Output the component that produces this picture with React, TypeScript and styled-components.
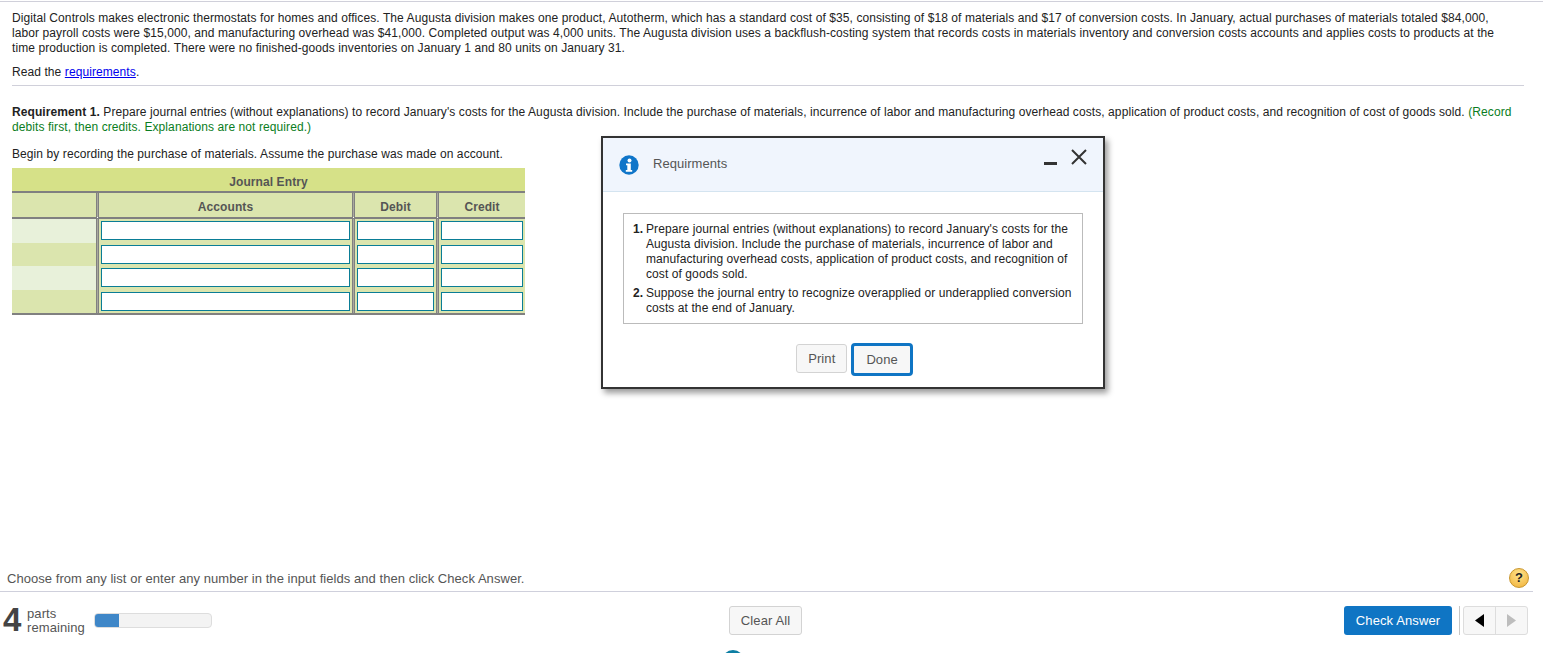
import React from "react";
import styled, { createGlobalStyle } from "styled-components";

const GlobalStyle = createGlobalStyle`
  html, body {
    margin: 0;
    padding: 0;
    background: #fff;
  }
  body {
    font-family: "Liberation Sans", Arial, sans-serif;
    font-size: 12px;
    letter-spacing: 0.085px;
    color: #222;
  }
`;

const rows = [0, 1, 2, 3];

const App: React.FC = () => (
  <>
    <GlobalStyle />
    <Page>
      <Question>
        <Intro>
          Digital Controls makes electronic thermostats for homes and offices. The Augusta division makes one product, Autotherm, which has a standard cost of $35, consisting of $18 of materials and $17 of conversion costs. In January, actual purchases of materials totaled $84,000, labor payroll costs were $15,000, and manufacturing overhead was $41,000. Completed output was 4,000 units. The Augusta division uses a backflush-costing system that records costs in materials inventory and conversion costs accounts and applies costs to products at the time production is completed. There were no finished-goods inventories on January 1 and 80 units on January 31.
        </Intro>
        <ReadLine>
          Read the <a href="#requirements">requirements</a>.
        </ReadLine>
      </Question>

      <Requirement>
        <Paragraph>
          <strong>Requirement 1.</strong> Prepare journal entries (without explanations) to record January's costs for the Augusta division. Include the purchase of materials, incurrence of labor and manufacturing overhead costs, application of product costs, and recognition of cost of goods sold. <Hint>(Record debits first, then credits. Explanations are not required.)</Hint>
        </Paragraph>
        <Instruction>Begin by recording the purchase of materials. Assume the purchase was made on account.</Instruction>

        <JournalTable>
          <TableTitle>Journal Entry</TableTitle>
          <HeadCell />
          <HeadCell>Accounts</HeadCell>
          <HeadCell>Debit</HeadCell>
          <HeadCell>Credit</HeadCell>
          {rows.map((row) => (
            <React.Fragment key={row}>
              <StripeCell $alt={row % 2 === 1} />
              <InputCell><AmountInput aria-label="Account" /></InputCell>
              <InputCell><AmountInput aria-label="Debit" /></InputCell>
              <InputCell><AmountInput aria-label="Credit" /></InputCell>
            </React.Fragment>
          ))}
        </JournalTable>
      </Requirement>

      <Spacer />

      <Prompt>
        <span>Choose from any list or enter any number in the input fields and then click Check Answer.</span>
        <HelpBadge>?</HelpBadge>
      </Prompt>

      <Footer>
        <Parts>
          <PartsCount>4</PartsCount>
          <PartsLabel>parts<br />remaining</PartsLabel>
          <Progress><ProgressFill style={{ width: `${(24 / 118) * 100}%` }} /></Progress>
        </Parts>
        <GhostButton>Clear All</GhostButton>
        <Actions>
          <PrimaryButton>Check Answer</PrimaryButton>
          <Divider />
          <Pager>
            <PagerButton aria-label="Previous">
              <svg width="9" height="13" viewBox="0 0 9 13"><path d="M9 0v13L0 6.500z" fill="#000" /></svg>
            </PagerButton>
            <PagerButton aria-label="Next">
              <svg width="9" height="13" viewBox="0 0 9 13"><path d="M0 0v13l9-6.500z" fill="#bdbdbd" /></svg>
            </PagerButton>
          </Pager>
        </Actions>
      </Footer>

      <PeekingDot />

      <Dialog>
        <DialogHeader>
          <svg width="20" height="20" viewBox="0 0 20 20">
            <circle cx="10" cy="10" r="9.700" fill="#0f75c9" />
            <circle cx="10.500" cy="5.500" r="2" fill="#fff" />
            <path d="M7 8.500h4.800v6.500h1.400v1.700H6.800V15h1.500v-4.800H7z" fill="#fff" />
          </svg>
          <DialogTitle>Requirments</DialogTitle>
          <WindowControls>
            <Minimize />
            <svg width="16" height="16" viewBox="0 0 16 16">
              <path d="M1 1l14 14M15 1L1 15" stroke="#333" strokeWidth="2" fill="none" />
            </svg>
          </WindowControls>
        </DialogHeader>
        <DialogBody>
          <RequirementList>
            <RequirementItem>
              <b>1.</b>
              <span>Prepare journal entries (without explanations) to record January's costs for the Augusta division. Include the purchase of materials, incurrence of labor and manufacturing overhead costs, application of product costs, and recognition of cost of goods sold.</span>
            </RequirementItem>
            <RequirementItem>
              <b>2.</b>
              <span>Suppose the journal entry to recognize overapplied or underapplied conversion costs at the end of January.</span>
            </RequirementItem>
          </RequirementList>
          <DialogActions>
            <GhostButton>Print</GhostButton>
            <DoneButton>Done</DoneButton>
          </DialogActions>
        </DialogBody>
      </Dialog>
    </Page>
  </>
);

const Page = styled.div`
  position: relative;
  display: flex;
  flex-direction: column;
  box-sizing: border-box;
  height: 653px;
  padding-top: 1px;
  overflow: hidden;
`;

const Question = styled.section`
  position: relative;
  margin: 0 19px 0 12px;
  padding: 10px 0 5px;
  border-bottom: 1px solid #d0d0da;

  &::before {
    content: "";
    position: absolute;
    top: 0;
    left: -12px;
    right: -19px;
    height: 1px;
    background: #d0d0da;
  }
`;

const Paragraph = styled.p`
  margin: 0;
  line-height: 15px;
`;

const Intro = styled(Paragraph)`
  max-width: 1490px;
`;

const ReadLine = styled.p`
  margin: 9px 0 0;
  line-height: 15px;

  a {
    color: #0000ee;
  }
`;

const Requirement = styled.section`
  padding: 19px 19px 0 12px;
`;

const Hint = styled.span`
  color: #0a7d22;
`;

const Instruction = styled.p`
  margin: 12px 0 6px;
  line-height: 15px;
`;

const JournalTable = styled.div`
  display: grid;
  grid-template-columns: 84px 256px 84px 89px;
  width: 513px;
  border-bottom: 2px solid #808080;
`;

const TableTitle = styled.div`
  grid-column: 1 / -1;
  height: 23px;
  line-height: 29px;
  text-align: center;
  font-weight: 700;
  color: #555;
  background: #d6e188;
  border-bottom: 2px solid #808080;
`;

const columnRule = `
  border-left: 3px double #808080;
  background: linear-gradient(#dbe5ae, #dbe5ae) padding-box, linear-gradient(#a9a99e, #a9a99e) border-box;
`;

const HeadCell = styled.div`
  height: 24px;
  line-height: 28px;
  text-align: center;
  font-weight: 700;
  color: #555;
  background: #dbe5ae;
  border-bottom: 2px solid #808080;

  & + & {
    ${columnRule}
  }
`;

const StripeCell = styled.div<{ $alt: boolean }>`
  height: 23.500px;
  background: ${(props) => (props.$alt ? "#dbe5ae" : "#e8f1da")};
`;

const InputCell = styled.div`
  display: flex;
  align-items: center;
  height: 23.500px;
  padding: 0 2px;
  ${columnRule}
`;

const AmountInput = styled.input`
  display: block;
  box-sizing: border-box;
  width: 100%;
  height: 19px;
  margin: 0;
  padding: 0;
  background: #fff;
  border: 1px solid #0a7d96;
  outline: none;
`;

const Spacer = styled.div`
  flex: 1;
`;

const Prompt = styled.div`
  display: flex;
  align-items: center;
  justify-content: space-between;
  height: 26px;
  margin-right: 10px;
  padding: 0 4px 0 7px;
  border-bottom: 1px solid #cfd0dc;
  color: #555;
  font-size: 13px;
  letter-spacing: 0.05px;
`;

const HelpBadge = styled.span`
  width: 20px;
  height: 20px;
  margin-bottom: 1px;
  border: 1px solid #c9962d;
  border-radius: 50%;
  box-sizing: border-box;
  display: flex;
  align-items: center;
  justify-content: center;
  font-size: 13px;
  font-weight: 700;
  color: #222;
  background: radial-gradient(circle at 50% 30%, #ffe38a, #f0b038);
`;

const Footer = styled.div`
  display: grid;
  grid-template-columns: 1fr auto 1fr;
  align-items: center;
  height: 61px;
  padding: 0 15px 4px 3px;
  box-sizing: border-box;
`;

const Parts = styled.div`
  display: flex;
  align-items: center;
`;

const PartsCount = styled.span`
  width: 24px;
  margin-bottom: 2px;
  font-size: 33px;
  line-height: 30px;
  font-weight: 700;
  color: #444;
`;

const PartsLabel = styled.span`
  width: 67px;
  font-size: 13px;
  line-height: 14px;
  color: #555;
`;

const Progress = styled.div`
  width: 118px;
  height: 15px;
  box-sizing: border-box;
  border: 1px solid #ddd;
  border-radius: 4px;
  background: #f3f3f3;
  overflow: hidden;
`;

const ProgressFill = styled.div`
  height: 100%;
  background: #3f87c8;
`;

const GhostButton = styled.button`
  height: 29px;
  padding: 0 11px;
  border: 1px solid #d3d3d3;
  border-radius: 3px;
  background: #f7f7f7;
  font: 13px "Liberation Sans", Arial, sans-serif;
  letter-spacing: 0.1px;
  color: #555;
`;

const Actions = styled.div`
  display: flex;
  align-items: center;
  justify-content: flex-end;
`;

const PrimaryButton = styled.button`
  width: 108px;
  height: 29px;
  padding: 0;
  border: 0;
  border-radius: 3px;
  background: #0f75c4;
  color: #fff;
  font: 13px "Liberation Sans", Arial, sans-serif;
  letter-spacing: 0.1px;
`;

const Divider = styled.span`
  width: 1px;
  height: 29px;
  margin: 0 3px 0 7px;
  background: #c6c6c6;
`;

const Pager = styled.div`
  display: flex;
  width: 65px;
  height: 29px;
  box-sizing: border-box;
  border: 1px solid #ddd;
  border-radius: 3px;
  background: #f7f7f7;
`;

const PagerButton = styled.button`
  flex: 1;
  padding: 0;
  border: 0;
  background: none;
  display: flex;
  align-items: center;
  justify-content: center;

  & + & {
    border-left: 1px solid #ddd;
  }
`;

const PeekingDot = styled.div`
  position: absolute;
  left: 722px;
  top: 650px;
  width: 22px;
  height: 22px;
  border-radius: 50%;
  background: #0c7ea3;
`;

const Dialog = styled.div`
  position: absolute;
  left: 601px;
  top: 136px;
  width: 504px;
  height: 253px;
  box-sizing: border-box;
  border: 2px solid #333;
  background: #fff;
  box-shadow: 3px 4px 6px rgba(0, 0, 0, 0.4);
`;

const DialogHeader = styled.header`
  display: flex;
  align-items: center;
  gap: 14px;
  height: 54px;
  box-sizing: border-box;
  padding: 0 16px;
  background: #f0f5fd;
  border-bottom: 1px solid #d4e4f0;
`;

const DialogTitle = styled.span`
  flex: 1;
  margin-bottom: 2px;
  font-size: 13px;
  letter-spacing: 0.05px;
  color: #555;
`;

const WindowControls = styled.div`
  display: flex;
  align-items: flex-end;
  gap: 14px;
  margin-bottom: 15px;
`;

const Minimize = styled.span`
  width: 13px;
  height: 3px;
  background: #333;
`;

const DialogBody = styled.div`
  padding: 21px 20px 0;
`;

const RequirementList = styled.div`
  box-sizing: border-box;
  width: 460px;
  padding: 8px 8px 7px 9px;
  border: 1px solid #bbb;
`;

const RequirementItem = styled.div`
  display: grid;
  grid-template-columns: 13px 1fr;
  line-height: 15px;
  color: #222;

  & + & {
    margin-top: 4px;
  }
`;

const DialogActions = styled.div`
  display: flex;
  align-items: flex-start;
  justify-content: center;
  gap: 4px;
  margin-top: 19px;
  padding-left: 3px;

  & > :first-child {
    margin-top: 1px;
  }
`;

const DoneButton = styled(GhostButton)`
  height: 33px;
  padding: 0 12px;
  border: 3px solid #0f75c4;
  border-radius: 4px;
`;

export default App;
